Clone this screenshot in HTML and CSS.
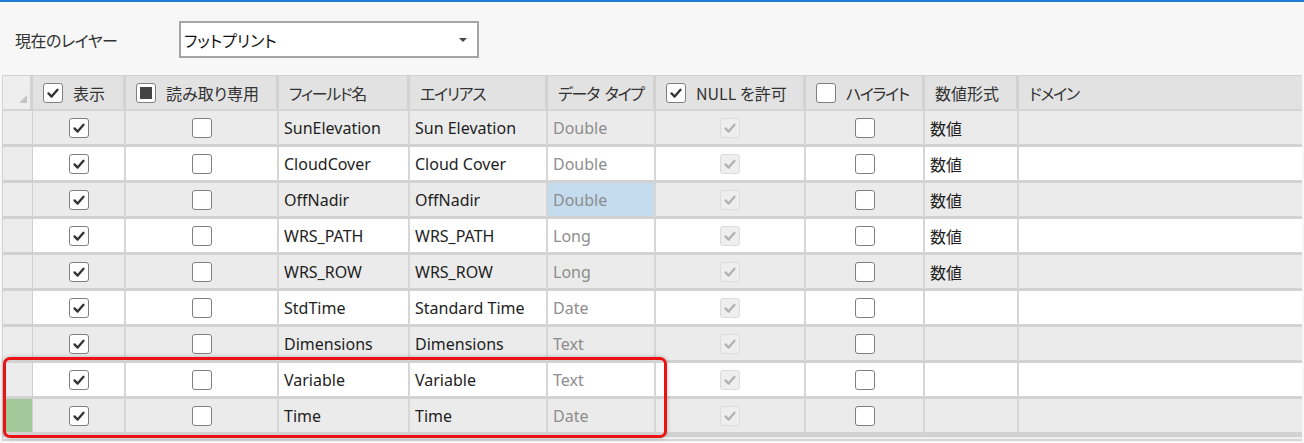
FILE: index.html
```html
<!DOCTYPE html>
<html lang="ja">
<head>
<meta charset="utf-8">
<link rel="stylesheet" href="styles.css">
</head>
<body>
<div class="topline"></div>
<div class="toolbar">
  <span class="layer-label">現在のレイヤー</span>
  <div class="dropdown"><span>フットプリント</span><span class="arrow"></span></div>
</div>
<div class="grid">
  <div class="row head">
    <div class="c rh"><span class="corner"></span></div>
    <div class="c hc"><span class="cb"><svg viewBox="0 0 20 20"><path d="M5 10.5 L8.5 14 L15 6.5" /></svg></span><span>表示</span></div>
    <div class="c hc"><span class="cb ind"><i></i></span><span>読み取り専用</span></div>
    <div class="c hc"><span class="kana">フィールド名</span></div>
    <div class="c hc"><span class="kana">エイリアス</span></div>
    <div class="c hc"><span class="kana">データ<span class="sp"> </span>タイプ</span></div>
    <div class="c hc"><span class="cb"><svg viewBox="0 0 20 20"><path d="M5 10.5 L8.5 14 L15 6.5" /></svg></span><span>NULL を許可</span></div>
    <div class="c hc"><span class="cb"></span><span class="kana">ハイライト</span></div>
    <div class="c hc"><span>数値形式</span></div>
    <div class="c hc last"><span class="kana">ドメイン</span></div>
  </div>

  <div class="row alt">
    <div class="c rh"></div>
    <div class="c ctr"><span class="cb"><svg viewBox="0 0 20 20"><path d="M5 10.5 L8.5 14 L15 6.5" /></svg></span></div>
    <div class="c ctr"><span class="cb"></span></div>
    <div class="c txt">SunElevation</div>
    <div class="c txt">Sun Elevation</div>
    <div class="c txt dim">Double</div>
    <div class="c ctr"><span class="cb dis"><svg viewBox="0 0 20 20"><path d="M5 10.5 L8.5 14 L15 6.5" /></svg></span></div>
    <div class="c ctr"><span class="cb"></span></div>
    <div class="c txt jp">数値</div>
    <div class="c last"></div>
  </div>

  <div class="row">
    <div class="c rh"></div>
    <div class="c ctr"><span class="cb"><svg viewBox="0 0 20 20"><path d="M5 10.5 L8.5 14 L15 6.5" /></svg></span></div>
    <div class="c ctr"><span class="cb"></span></div>
    <div class="c txt">CloudCover</div>
    <div class="c txt">Cloud Cover</div>
    <div class="c txt dim">Double</div>
    <div class="c ctr"><span class="cb dis"><svg viewBox="0 0 20 20"><path d="M5 10.5 L8.5 14 L15 6.5" /></svg></span></div>
    <div class="c ctr"><span class="cb"></span></div>
    <div class="c txt jp">数値</div>
    <div class="c last"></div>
  </div>

  <div class="row alt">
    <div class="c rh"></div>
    <div class="c ctr"><span class="cb"><svg viewBox="0 0 20 20"><path d="M5 10.5 L8.5 14 L15 6.5" /></svg></span></div>
    <div class="c ctr"><span class="cb"></span></div>
    <div class="c txt">OffNadir</div>
    <div class="c txt">OffNadir</div>
    <div class="c txt dim sel">Double</div>
    <div class="c ctr"><span class="cb dis"><svg viewBox="0 0 20 20"><path d="M5 10.5 L8.5 14 L15 6.5" /></svg></span></div>
    <div class="c ctr"><span class="cb"></span></div>
    <div class="c txt jp">数値</div>
    <div class="c last"></div>
  </div>

  <div class="row">
    <div class="c rh"></div>
    <div class="c ctr"><span class="cb"><svg viewBox="0 0 20 20"><path d="M5 10.5 L8.5 14 L15 6.5" /></svg></span></div>
    <div class="c ctr"><span class="cb"></span></div>
    <div class="c txt">WRS_PATH</div>
    <div class="c txt">WRS_PATH</div>
    <div class="c txt dim">Long</div>
    <div class="c ctr"><span class="cb dis"><svg viewBox="0 0 20 20"><path d="M5 10.5 L8.5 14 L15 6.5" /></svg></span></div>
    <div class="c ctr"><span class="cb"></span></div>
    <div class="c txt jp">数値</div>
    <div class="c last"></div>
  </div>

  <div class="row alt">
    <div class="c rh"></div>
    <div class="c ctr"><span class="cb"><svg viewBox="0 0 20 20"><path d="M5 10.5 L8.5 14 L15 6.5" /></svg></span></div>
    <div class="c ctr"><span class="cb"></span></div>
    <div class="c txt">WRS_ROW</div>
    <div class="c txt">WRS_ROW</div>
    <div class="c txt dim">Long</div>
    <div class="c ctr"><span class="cb dis"><svg viewBox="0 0 20 20"><path d="M5 10.5 L8.5 14 L15 6.5" /></svg></span></div>
    <div class="c ctr"><span class="cb"></span></div>
    <div class="c txt jp">数値</div>
    <div class="c last"></div>
  </div>

  <div class="row">
    <div class="c rh"></div>
    <div class="c ctr"><span class="cb"><svg viewBox="0 0 20 20"><path d="M5 10.5 L8.5 14 L15 6.5" /></svg></span></div>
    <div class="c ctr"><span class="cb"></span></div>
    <div class="c txt">StdTime</div>
    <div class="c txt">Standard Time</div>
    <div class="c txt dim">Date</div>
    <div class="c ctr"><span class="cb dis"><svg viewBox="0 0 20 20"><path d="M5 10.5 L8.5 14 L15 6.5" /></svg></span></div>
    <div class="c ctr"><span class="cb"></span></div>
    <div class="c txt"></div>
    <div class="c last"></div>
  </div>

  <div class="row alt">
    <div class="c rh"></div>
    <div class="c ctr"><span class="cb"><svg viewBox="0 0 20 20"><path d="M5 10.5 L8.5 14 L15 6.5" /></svg></span></div>
    <div class="c ctr"><span class="cb"></span></div>
    <div class="c txt">Dimensions</div>
    <div class="c txt">Dimensions</div>
    <div class="c txt dim">Text</div>
    <div class="c ctr"><span class="cb dis"><svg viewBox="0 0 20 20"><path d="M5 10.5 L8.5 14 L15 6.5" /></svg></span></div>
    <div class="c ctr"><span class="cb"></span></div>
    <div class="c txt"></div>
    <div class="c last"></div>
  </div>

  <div class="row">
    <div class="c rh"></div>
    <div class="c ctr"><span class="cb"><svg viewBox="0 0 20 20"><path d="M5 10.5 L8.5 14 L15 6.5" /></svg></span></div>
    <div class="c ctr"><span class="cb"></span></div>
    <div class="c txt">Variable</div>
    <div class="c txt">Variable</div>
    <div class="c txt dim">Text</div>
    <div class="c ctr"><span class="cb dis"><svg viewBox="0 0 20 20"><path d="M5 10.5 L8.5 14 L15 6.5" /></svg></span></div>
    <div class="c ctr"><span class="cb"></span></div>
    <div class="c txt"></div>
    <div class="c last"></div>
  </div>

  <div class="row alt">
    <div class="c rh cur"></div>
    <div class="c ctr"><span class="cb"><svg viewBox="0 0 20 20"><path d="M5 10.5 L8.5 14 L15 6.5" /></svg></span></div>
    <div class="c ctr"><span class="cb"></span></div>
    <div class="c txt">Time</div>
    <div class="c txt">Time</div>
    <div class="c txt dim">Date</div>
    <div class="c ctr"><span class="cb dis"><svg viewBox="0 0 20 20"><path d="M5 10.5 L8.5 14 L15 6.5" /></svg></span></div>
    <div class="c ctr"><span class="cb"></span></div>
    <div class="c txt"></div>
    <div class="c last"></div>
  </div>

  <div class="scrollbar"></div>
  <div class="highlight-box"></div>
</div>
</body>
</html>
```

FILE: styles.css
```css
* { box-sizing: border-box; }
html, body { margin: 0; padding: 0; }
body {
  background: #f7f7f7;
  font-family: "Noto Sans", "Noto Sans CJK JP", sans-serif;
  font-size: 16px;
  color: #1e1e1e;
  width: 1304px;
  height: 443px;
  overflow: hidden;
}
.topline { height: 2px; background: #1f7ed2; }
.toolbar {
  height: 73px;
  display: flex;
  align-items: center;
  padding-left: 15px;
}
.layer-label {
  width: 164px;
  font-family: "Noto Sans CJK JP", sans-serif;
  font-feature-settings: "palt";
  font-size: 16px;
  letter-spacing: -0.5px;
  color: #333;
  margin-top: 3px;
}
.dropdown {
  width: 300px;
  height: 37px;
  border: 2px solid #a5a5a5;
  background: #fff;
  display: flex;
  align-items: center;
  justify-content: space-between;
  padding: 0 10px 0 3px;
  font-family: "Noto Sans CJK JP", sans-serif;
  font-feature-settings: "palt";
  font-size: 16px;
  color: #111;
  margin-top: 2px;
}
.arrow {
  width: 0; height: 0;
  border-left: 4px solid transparent;
  border-right: 4px solid transparent;
  border-top: 4px solid #444;
}
.grid {
  position: relative;
  margin-left: 2px;
  width: 1300px;
  border-top: 1px solid #d3d3d3;
  border-left: 1px solid #d3d3d3;
}
.row {
  display: grid;
  grid-template-columns: 30px 93px 153px 131px 138px 108px 150px 119px 94px 1fr;
  height: 36px;
  background: #fff;
}
.row.alt { background: #ebebeb; }
.row.head { height: 35px; background: #e2e2e2; }
.c {
  border-right: 2px solid #d6d6d6;
  border-bottom: 3px solid #d2d2d2;
  display: flex;
  align-items: center;
  min-width: 0;
  white-space: nowrap;
}
.head .c { border-bottom: 2px solid #d4d4d4; border-right: 3px solid #d2d2d2; }
.c.last { border-right: none; }
.rh { background: #ececec; border-right: 1px solid #d0d0d0; }
.rh.cur { background: #a3c99b; }
.head .rh { background: #eeeeee; position: relative; }
.corner {
  position: absolute;
  left: 16px; bottom: 6px;
  width: 0; height: 0;
  border-left: 8px solid transparent;
  border-bottom: 8px solid #c4c4c4;
}
.hc {
  padding-left: 10px;
  gap: 10px;
  font-family: "Noto Sans CJK JP", "Noto Sans", sans-serif;
  font-feature-settings: "palt";
  font-size: 16px;
  color: #333;
}
.kana { letter-spacing: -1.3px; }
.sp { display: inline-block; width: 6px; }
.ctr { justify-content: center; }
.txt { padding-left: 5px; padding-top: 1px; }
.jp { font-family: "Noto Sans CJK JP", sans-serif; }
.dim { color: #8d8d8d; }
.sel { background: #c5dcef; }
.cb {
  width: 20px; height: 20px;
  border: 1.5px solid #808080;
  border-radius: 3px;
  background: #fff;
  display: inline-flex;
  align-items: center;
  justify-content: center;
  flex: none;
}
.cb svg { width: 18px; height: 18px; }
.cb path { fill: none; stroke: #333; stroke-width: 2.6; stroke-linecap: round; stroke-linejoin: round; }
.cb.dis { border-color: #dcdcdc; background: #eeeeee; }
.cb.dis path { stroke: #b3b3b3; }
.cb.ind i { width: 12px; height: 12px; background: #444; display: block; }
.scrollbar {
  height: 6px;
  border-top: 2px solid #d0d0d0;
  border-bottom: 2px solid #d6d6d6;
  background: #f0f0f0;
}
.highlight-box {
  position: absolute;
  left: 0; top: 281px;
  width: 664px; height: 81px;
  border: 3px solid #ea1313;
  border-radius: 7px;
  box-shadow: 0 0 4px rgba(0,0,0,0.25);
  pointer-events: none;
}
```
